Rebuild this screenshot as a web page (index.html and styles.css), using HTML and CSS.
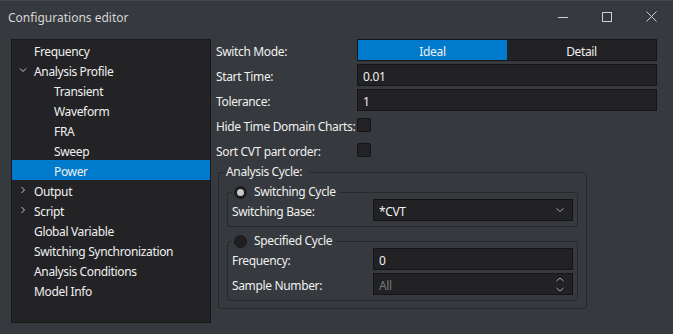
FILE: index.html
```html
<!DOCTYPE html>
<html lang="en">
<head>
  <meta charset="UTF-8">
  <title>Configurations editor</title>
  <link rel="stylesheet" href="styles.css">
</head>
<body>
  <div class="window">
    <div class="titlebar">
      <span class="title">Configurations editor</span>
      <div class="caption">
        <span class="cap-btn">
          <svg width="10" height="10" viewBox="0 0 10 10"><path d="M0 5.5h10" stroke="#d0d0d0" stroke-width="1"/></svg>
        </span>
        <span class="cap-btn">
          <svg width="10" height="10" viewBox="0 0 10 10"><rect x="0.5" y="0.5" width="9" height="9" fill="none" stroke="#d0d0d0" stroke-width="1"/></svg>
        </span>
        <span class="cap-btn">
          <svg width="11" height="11" viewBox="0 0 11 11"><path d="M0.5 0.5l10 10M10.5 0.5l-10 10" stroke="#d0d0d0" stroke-width="1"/></svg>
        </span>
      </div>
    </div>

    <div class="content">
      <ul class="tree">
        <li class="node"><span class="twisty"></span>Frequency</li>
        <li class="node"><span class="twisty"><svg width="8" height="8" viewBox="0 0 8 8"><path d="M1 2.5l3 3 3-3" fill="none" stroke="#c8c8c8" stroke-width="1"/></svg></span>Analysis Profile</li>
        <li class="node child">Transient</li>
        <li class="node child">Waveform</li>
        <li class="node child">FRA</li>
        <li class="node child">Sweep</li>
        <li class="node child selected">Power</li>
        <li class="node"><span class="twisty"><svg width="8" height="8" viewBox="0 0 8 8"><path d="M2.5 1l3 3-3 3" fill="none" stroke="#c8c8c8" stroke-width="1"/></svg></span>Output</li>
        <li class="node"><span class="twisty"><svg width="8" height="8" viewBox="0 0 8 8"><path d="M2.5 1l3 3-3 3" fill="none" stroke="#c8c8c8" stroke-width="1"/></svg></span>Script</li>
        <li class="node"><span class="twisty"></span>Global Variable</li>
        <li class="node"><span class="twisty"></span>Switching Synchronization</li>
        <li class="node"><span class="twisty"></span>Analysis Conditions</li>
        <li class="node"><span class="twisty"></span>Model Info</li>
      </ul>

      <div class="pane">
        <div class="form">
          <span class="label">Switch Mode:</span>
          <div class="segmented">
            <span class="seg active">Ideal</span>
            <span class="seg">Detail</span>
          </div>

          <span class="label">Start Time:</span>
          <div class="input">0.01</div>

          <span class="label">Tolerance:</span>
          <div class="input">1</div>

          <span class="label">Hide Time Domain Charts:</span>
          <div class="check-cell"><span class="checkbox"></span></div>

          <span class="label">Sort CVT part order:</span>
          <div class="check-cell"><span class="checkbox"></span></div>
        </div>

        <fieldset class="group">
          <legend class="group-title">Analysis Cycle:</legend>

          <fieldset class="subgroup">
            <legend class="sub-title"><span class="radio checked"></span>Switching Cycle</legend>
            <div class="form sub">
              <span class="label">Switching Base:</span>
              <div class="input combo">
                <span>*CVT</span>
                <svg width="8" height="6" viewBox="0 0 8 6"><path d="M0.5 1.5l3.5 3 3.5-3" fill="none" stroke="#a8a8a8" stroke-width="1"/></svg>
              </div>
            </div>
          </fieldset>

          <fieldset class="subgroup second">
            <legend class="sub-title"><span class="radio"></span>Specified Cycle</legend>
            <div class="form sub">
              <span class="label">Frequency:</span>
              <div class="input">0</div>

              <span class="label">Sample Number:</span>
              <div class="input spin disabled">
                <span>All</span>
                <span class="spin-arrows">
                  <svg width="8" height="5" viewBox="0 0 8 5"><path d="M0.5 4l3.5-3 3.5 3" fill="none" stroke="#a8a8a8" stroke-width="1"/></svg>
                  <svg width="8" height="5" viewBox="0 0 8 5"><path d="M0.5 1l3.5 3 3.5-3" fill="none" stroke="#a8a8a8" stroke-width="1"/></svg>
                </span>
              </div>
            </div>
          </fieldset>
        </fieldset>
      </div>
    </div>
  </div>
</body>
</html>
```

FILE: styles.css
```css
:root {
  --window-bg: #36393e;
  --panel-bg: #232326;
  --field-bg: #222224;
  --field-border: #151516;
  --group-border: #26282c;
  --accent: #007acc;
  --text: #f0f0f0;
}

* {
  box-sizing: border-box;
}

body {
  margin: 0;
  background: var(--window-bg);
  font-family: "Noto Sans", "Open Sans", sans-serif;
  font-size: 12px;
  letter-spacing: -0.35px;
  color: var(--text);
}

.window {
  width: 673px;
  height: 334px;
  display: flex;
  flex-direction: column;
  background: var(--window-bg);
  border-top: 1px solid #45484d;
}

/* title bar */
.titlebar {
  height: 31px;
  display: flex;
  align-items: center;
  justify-content: space-between;
  padding-left: 8px;
}

.title {
  color: #d6d6d6;
  font-size: 12px;
  letter-spacing: 0;
  padding-top: 1px;
}

.caption {
  display: flex;
  align-self: stretch;
}

.cap-btn {
  width: 44px;
  display: flex;
  align-items: center;
  justify-content: center;
}

/* body */
.content {
  flex: 1;
  display: flex;
  gap: 5px;
  padding: 7px 11px 11px 11px;
}

.tree {
  list-style: none;
  margin: 0;
  padding: 0;
  width: 200px;
  background: var(--panel-bg);
  border: 1px solid #19191a;
}

.node {
  height: 20px;
  padding-top: 2px;
  display: flex;
  align-items: center;
  white-space: nowrap;
}

.twisty {
  width: 22px;
  display: flex;
  align-items: center;
  padding-left: 7px;
  margin-top: -2px;
}

.node.child {
  padding-left: 42px;
}

.node.selected {
  background: var(--accent);
}

.pane {
  flex: 1;
}

.form {
  display: grid;
  grid-template-columns: 141px 300px;
  grid-auto-rows: 22px;
  row-gap: 3px;
  align-items: center;
}

.label {
  white-space: nowrap;
  padding-top: 2px;
}

.segmented {
  height: 22px;
  display: flex;
  border: 1px solid var(--field-border);
  background: var(--field-bg);
}

.seg {
  flex: 1;
  display: flex;
  align-items: center;
  justify-content: center;
  padding-top: 2px;
}

.seg.active {
  background: var(--accent);
}

.input {
  height: 22px;
  display: flex;
  align-items: center;
  justify-content: space-between;
  padding: 2px 5px 0 5px;
  background: var(--field-bg);
  border: 1px solid var(--field-border);
}

.combo svg {
  margin: -2px 3px 0 0;
}

.disabled span {
  color: #76777a;
}

.spin-arrows {
  display: flex;
  flex-direction: column;
  gap: 5px;
  margin: -2px 3px 0 0;
}

.spin-arrows svg {
  display: block;
}

.check-cell {
  display: flex;
  align-items: center;
}

.checkbox {
  width: 14px;
  height: 14px;
  background: var(--panel-bg);
  border: 1px solid #141415;
  border-radius: 2px;
}

/* group boxes */
.group {
  margin: 3px 0 0 2px;
  width: 369px;
  padding: 0 8px 7px 8px;
  border: 1px solid var(--group-border);
  border-radius: 3px;
}

.group-title {
  margin-left: -2px;
  padding: 0 7px 0 1px;
  line-height: 16px;
}

.subgroup {
  margin: 5px 0 0 0;
  padding: 0 4px 5px 4px;
  border: 1px solid var(--group-border);
  border-radius: 3px;
}

.subgroup.second {
  margin-top: 7px;
}

.sub-title {
  display: flex;
  align-items: center;
  gap: 7px;
  margin-left: 0;
  padding: 0 4px 0 2px;
  line-height: 14px;
  height: 14px;
}

.radio {
  width: 13px;
  height: 13px;
  border-radius: 50%;
  background: #1f1f21;
  border: 1px solid #1a1a1b;
}

.radio.checked {
  background: #c8c8c8;
  border: 3px solid #1d1d1f;
}

.form.sub {
  grid-template-columns: 141px 200px;
}
```
